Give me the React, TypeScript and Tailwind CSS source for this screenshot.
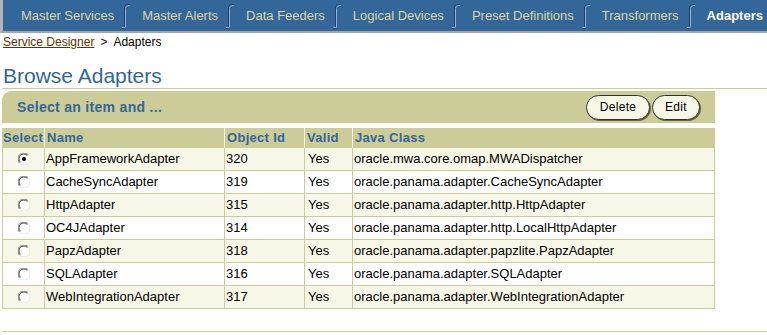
import React from "react";

const tabs = [
  "Master Services",
  "Master Alerts",
  "Data Feeders",
  "Logical Devices",
  "Preset Definitions",
  "Transformers",
];

const adapters = [
  { name: "AppFrameworkAdapter", id: 320, valid: "Yes", cls: "oracle.mwa.core.omap.MWADispatcher" },
  { name: "CacheSyncAdapter", id: 319, valid: "Yes", cls: "oracle.panama.adapter.CacheSyncAdapter" },
  { name: "HttpAdapter", id: 315, valid: "Yes", cls: "oracle.panama.adapter.http.HttpAdapter" },
  { name: "OC4JAdapter", id: 314, valid: "Yes", cls: "oracle.panama.adapter.http.LocalHttpAdapter" },
  { name: "PapzAdapter", id: 318, valid: "Yes", cls: "oracle.panama.adapter.papzlite.PapzAdapter" },
  { name: "SQLAdapter", id: 316, valid: "Yes", cls: "oracle.panama.adapter.SQLAdapter" },
  { name: "WebIntegrationAdapter", id: 317, valid: "Yes", cls: "oracle.panama.adapter.WebIntegrationAdapter" },
];

// tab divider, the little integral-shaped stroke between tabs
const TabDivider = () => (
  <svg width="8" height="26" viewBox="0 0 8 26" className="ml-[8px] mr-[12px] shrink-0">
    <path d="M0 25.5 H2.5 V5 Q2.5 1.5 6 1.5 H8" stroke="#1d3f6a" fill="none" />
    <path d="M0 24.5 H3.5 V5.5 Q3.5 2.5 6.5 2.5 H8" stroke="#8fb1da" fill="none" />
  </svg>
);

const Radio = ({ checked }: { checked: boolean }) => (
  <svg width="12" height="12" viewBox="0 0 12 12">
    <circle cx="6" cy="6" r="5.5" fill="#ffffff" />
    <path d="M1.6 10.1 A5.5 5.5 0 0 1 10.1 1.6" stroke="#808080" fill="none" />
    <path d="M2.4 9.3 A4.4 4.4 0 0 1 9.3 2.4" stroke="#404040" fill="none" />
    <path d="M10.4 1.9 A5.5 5.5 0 0 1 1.9 10.4" stroke="#e4e4e4" fill="none" />
    {checked && <circle cx="6" cy="6" r="2" fill="#000000" />}
  </svg>
);

const cols = ["w-[42px]", "w-[180px]", "w-[80px]", "w-[48px]", "w-[363px]"];

export default function App() {
  return (
    <div className="w-[767px] h-[335px] bg-white overflow-hidden font-['Liberation_Sans',Arial,sans-serif]">
      {/* tab bar */}
      <div className="h-[33px] bg-[#336699] border-l-[3px] border-l-[#b4b4b4] border-b-2 border-b-[#a4a4a4] flex items-center pl-[18px] text-[13px]">
        {tabs.map((t) => (
          <React.Fragment key={t}>
            <span className="text-[#dcd5a0] whitespace-nowrap">{t}</span>
            <TabDivider />
          </React.Fragment>
        ))}
        <span className="text-white font-bold whitespace-nowrap">Adapters</span>
      </div>

      {/* breadcrumb */}
      <div className="h-[18px] leading-[18px] pl-[3px] text-[12px] text-black">
        <a className="text-[#663300] underline">Service Designer</a>
        <span className="mx-[6px]">&gt;</span>
        Adapters
      </div>

      <div className="pl-[2px]">
        <h1 className="mt-[13px] h-[25px] leading-[24px] pl-[1px] text-[21px] text-[#336699] border-b border-[#cccc99]">
          Browse Adapters
        </h1>

        {/* action bar */}
        <div className="mt-[2px] w-[713px] h-[32px] bg-[#cccc99] rounded-tl-[9px] flex items-center justify-between pl-[15px] pr-[15px]">
          <span className="text-[14px] font-bold tracking-[0.3px] text-[#336699]">Select an item and ...</span>
          <div className="flex gap-[2px]">
            <button className="h-[25px] w-[64px] rounded-full bg-[#f7f7e7] border border-[#333333] shadow-[1px_1px_0_#666633] text-[12px] tracking-[0.3px] text-black">
              Delete
            </button>
            <button className="h-[25px] w-[48px] rounded-full bg-[#f7f7e7] border border-[#333333] shadow-[1px_1px_0_#666633] text-[12px] tracking-[0.3px] text-black">
              Edit
            </button>
          </div>
        </div>

        {/* table */}
        <div className="mt-[5px] w-[713px] text-[13px]">
          <div className="flex h-[20px] bg-[#cccc99] text-[#336699] font-bold tracking-[0.3px] leading-[20px]">
            <div className={`${cols[0]} pl-[1px]`}>Select</div>
            <div className={`${cols[1]} pl-[2px] border-l border-[#f7f7e7]`}>Name</div>
            <div className={`${cols[2]} pl-[2px] border-l border-[#f7f7e7]`}>Object Id</div>
            <div className={`${cols[3]} pl-[2px] border-l border-[#f7f7e7]`}>Valid</div>
            <div className={`${cols[4]} pl-[2px] border-l border-[#f7f7e7]`}>Java Class</div>
          </div>
          {adapters.map((a, i) => (
            <div
              key={a.name}
              className={`flex h-[23px] leading-[22px] border-b border-[#cccc99] text-black ${
                i % 2 === 0 ? "bg-[#f7f7e7]" : "bg-white"
              }`}
            >
              <div className={`${cols[0]} border-l border-[#cccc99] flex items-center justify-center`}>
                <Radio checked={i === 0} />
              </div>
              <div className={`${cols[1]} pl-[1px] border-l border-[#cccc99]`}>{a.name}</div>
              <div className={`${cols[2]} pl-[1px] border-l border-[#cccc99]`}>{a.id}</div>
              <div className={`${cols[3]} pl-[3px] border-l border-[#cccc99]`}>{a.valid}</div>
              <div className={`${cols[4]} pl-[1px] border-l border-r border-[#cccc99]`}>{a.cls}</div>
            </div>
          ))}
        </div>

        <div className="mt-[22px] border-t border-[#cccc99]" />
      </div>
    </div>
  );
}
